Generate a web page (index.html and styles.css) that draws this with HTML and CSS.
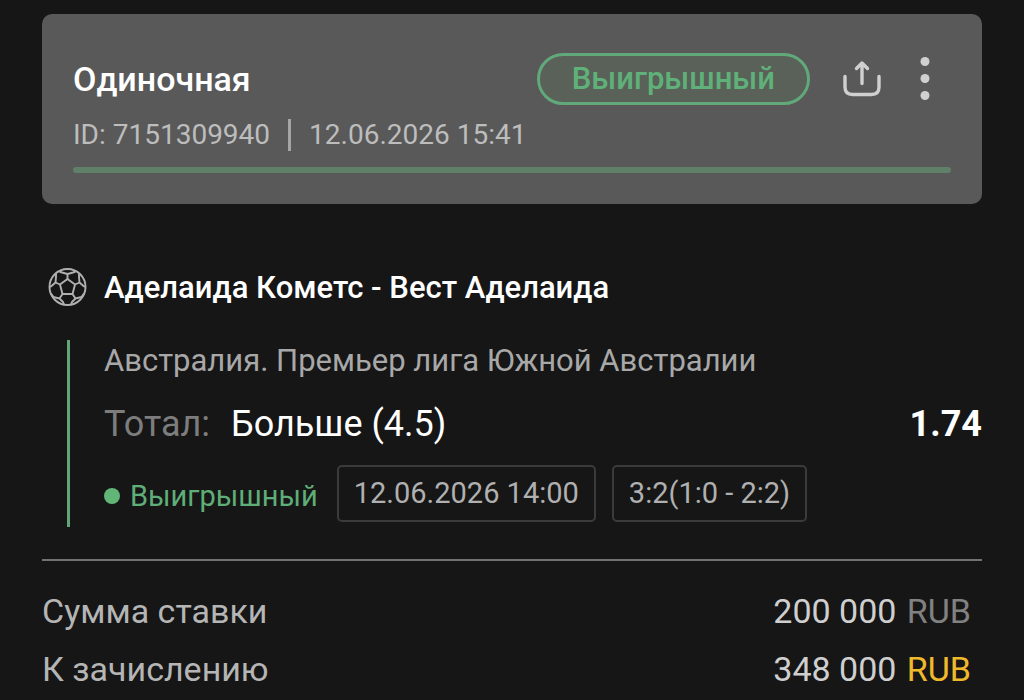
FILE: index.html
```html
<!DOCTYPE html>
<html lang="ru">
<head>
<meta charset="utf-8">
<meta name="viewport" content="width=device-width, initial-scale=1">
<title>Одиночная ставка</title>
<link rel="stylesheet" href="styles.css">
</head>
<body>
<main class="bet">
  <header class="card">
    <div class="card-top">
      <h1 class="title">Одиночная</h1>
      <span class="badge">Выигрышный</span>
      <button class="icon-button share" type="button" aria-label="Поделиться">
        <svg width="40" height="40" viewBox="0 0 40 40" fill="none" stroke="currentColor" stroke-width="3.4" stroke-linecap="round" stroke-linejoin="round">
          <path d="M3 17.500V28Q3 35.500 10.500 35.500H29.500Q37 35.500 37 28V17.500"/>
          <path d="M20 24.500V4.500M14.500 9.500L20 4L25.500 9.500"/>
        </svg>
      </button>
      <button class="icon-button more" type="button" aria-label="Меню">
        <svg width="12" height="48" viewBox="0 0 12 48" fill="currentColor">
          <circle cx="6" cy="6.500" r="4.500"/><circle cx="6" cy="23.500" r="4.500"/><circle cx="6" cy="40.500" r="4.500"/>
        </svg>
      </button>
    </div>
    <div class="meta"><span>ID: 7151309940</span><span class="divider"></span><time>12.06.2026 15:41</time></div>
    <div class="progress"></div>
  </header>

  <section class="event">
    <div class="match">
      <svg class="ball" width="40" height="40" viewBox="0 0 40 40" fill="none" stroke="currentColor" stroke-width="1.900" stroke-linejoin="round">
        <circle cx="19.500" cy="19" r="18"/>
        <path d="M19.500 11L27 16.500L24.500 26H14.500L12 16.500Z"/>
        <path d="M19.500 11V6M27 16.500L31.500 14.500M24.500 26L27.500 30.500M14.500 26L11.500 30.500M12 16.500L7.500 14.500"/>
        <path d="M11.500 3.500L14 4.500L19.500 6L25 4.500L27.500 3.500M31 5.500V9L31.500 14.500L35.500 18L37 19M36 25.500L33.500 29L27.500 30.500L24 34L23 36.500M16 36.500L15 34L11.500 30.500L5.500 29L3 25.500M2 19L3.500 18L7.500 14.500L8 9V5.500"/>
      </svg>
      <h2 class="teams">Аделаида Кометс - Вест Аделаида</h2>
    </div>
    <div class="details">
      <p class="league">Австралия. Премьер лига Южной Австралии</p>
      <div class="pick">
        <span class="market">Тотал:</span>
        <span class="outcome">Больше (4.5)</span>
        <strong class="odds">1.74</strong>
      </div>
      <div class="result">
        <span class="status">Выигрышный</span>
        <time class="chip">12.06.2026 14:00</time>
        <span class="chip">3:2(1:0 - 2:2)</span>
      </div>
    </div>
  </section>

  <dl class="totals">
    <div class="row"><dt>Сумма ставки</dt><dd>200 000 <span class="currency">RUB</span></dd></div>
    <div class="row"><dt>К зачислению</dt><dd>348 000 <span class="currency win">RUB</span></dd></div>
  </dl>
</main>
</body>
</html>
```

FILE: styles.css
```css
* { box-sizing: border-box; }

body {
  margin: 0;
  background: #161616;
  color: #fff;
  font-family: Roboto, "Noto Sans", sans-serif;
}

h1, h2, p, dl, dd { margin: 0; }

.bet { padding: 14px 42px 0; }

.card {
  padding: 39px 31px 31px;
  border-radius: 10px;
  background: #595959;
}

.card-top {
  display: flex;
  align-items: center;
}

.title {
  flex: 1;
  font-size: 34px;
  line-height: 40px;
  font-weight: 500;
}

.badge {
  padding: 0 32px;
  border: 3px solid #61a87b;
  border-radius: 26px;
  background: #596159;
  color: #5fb179;
  font-size: 31px;
  line-height: 46px;
  font-weight: 500;
}

.icon-button {
  display: flex;
  padding: 0;
  border: 0;
  background: none;
  color: #d0d0d0;
}

.share { margin-left: 32px; }
.more { margin: 0 20px 0 37px; }

.meta {
  display: flex;
  align-items: center;
  gap: 18px;
  margin-top: 12px;
  color: #bdbdbd;
  font-size: 28px;
  line-height: 36px;
}

.divider {
  width: 3px;
  height: 32px;
  background: #a6a6a6;
}

.progress {
  height: 6px;
  margin-top: 14px;
  border-radius: 3px;
  background: #618068;
}

.event {
  padding: 60px 0 32px;
  border-bottom: 2px solid #727272;
}

.match {
  display: flex;
  align-items: center;
  gap: 16px;
  padding-left: 6px;
}

.ball { color: #b0b0b0; }

.teams {
  font-size: 31px;
  line-height: 48px;
  font-weight: 500;
}

.details {
  margin: 28px 0 0 25px;
  padding-left: 34px;
  border-left: 3px solid #62a576;
}

.league {
  color: #a8a8a8;
  font-size: 31px;
  line-height: 42px;
}

.pick {
  display: flex;
  align-items: center;
  gap: 21px;
  margin-top: 20px;
  font-size: 36px;
  line-height: 44px;
}

.market { color: #7d7d7d; }

.odds {
  margin-left: auto;
  font-weight: 700;
}

.result {
  display: flex;
  align-items: center;
  gap: 16px;
  margin-top: 19px;
  padding-bottom: 5px;
  font-size: 29px;
}

.status {
  display: flex;
  align-items: center;
  gap: 10px;
  margin-right: 3px;
  padding-top: 4px;
  color: #5fae78;
}

.status::before {
  content: "";
  width: 16px;
  height: 16px;
  border-radius: 50%;
  background: #60b577;
}

.chip {
  padding: 0 15px;
  border: 2px solid #3b3b3b;
  border-radius: 5px;
  color: #b0b0b0;
  line-height: 53px;
}

.totals {
  padding: 21px 11px 8px 0;
  font-size: 34px;
  line-height: 58px;
}

.row {
  display: flex;
  justify-content: space-between;
}

dt { color: #b5b5b5; }
dd { color: #cfcfcf; }

.currency {
  margin-left: 2px;
  color: #818181;
}

.currency.win { color: #f0b92c; }
```
